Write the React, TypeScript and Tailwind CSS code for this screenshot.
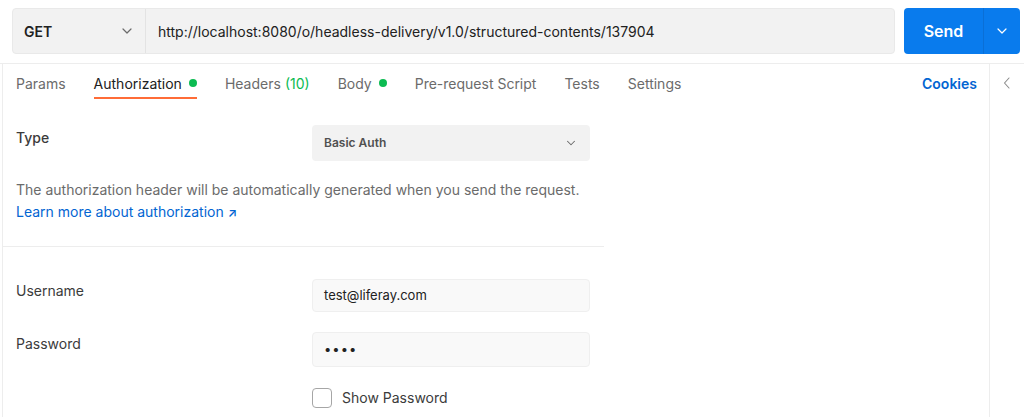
import React from "react";

const Chevron = ({ className = "" }: { className?: string }) => (
  <svg viewBox="0 0 16 16" className={className} fill="none" stroke="currentColor" strokeWidth="1.2" strokeLinecap="round" strokeLinejoin="round">
    <path d="M4 6l4 4 4-4" />
  </svg>
);

const Tab = ({ label, active, dot, count }: { label: string; active?: boolean; dot?: boolean; count?: string }) => (
  <div className="relative flex h-full items-center">
    <span className={active ? "text-[#212121]" : "text-[#6b6b6b]"}>{label}</span>
    {count && <span className="ml-[4px] text-[#0cbb52]">{count}</span>}
    {dot && <span className="ml-[7px] inline-block h-[8px] w-[8px] rounded-full bg-[#0cbb52]" />}
    {active && <span className="absolute bottom-[3px] left-0 right-0 h-[2px] bg-[#ff6c37]" />}
  </div>
);

export default function App() {
  return (
    <div className="h-[417px] w-[1024px] overflow-hidden bg-white text-[14px] text-[#212121]" style={{ fontFamily: "Inter, 'Noto Sans', sans-serif" }}>
      {/* request bar */}
      <div className="flex h-[64px] items-start gap-[9px] border-b border-[#ededed] pl-[12px] pt-[8px]">
        <div className="flex h-[46px] w-[883px] rounded-[4px] border border-[#e9e9e9] bg-[#f2f2f2]">
          <div className="flex w-[133px] items-center justify-between border-r border-[#e3e3e3] pl-[11px] pr-[10px]">
            <span className="font-semibold text-[#212121]">GET</span>
            <Chevron className="h-[16px] w-[16px] text-[#6b6b6b]" />
          </div>
          <div className="flex items-center pl-[12px] text-[#212121]">http://localhost:8080/o/headless-delivery/v1.0/structured-contents/137904</div>
        </div>
        <div className="flex h-[46px] w-[116px] overflow-hidden rounded-[4px] bg-[#097bed] text-white">
          <div className="flex w-[79px] items-center justify-center text-[16px] font-semibold">Send</div>
          <div className="flex flex-1 items-center justify-center border-l border-[#0a6fd6]">
            <Chevron className="h-[16px] w-[16px]" />
          </div>
        </div>
      </div>

      <div className="ml-[2px] flex h-[353px] border-l border-[#ededed]">
        <div className="w-[987px] border-r border-[#ededed]">
          {/* tabs */}
          <div className="flex h-[38px] items-center pl-[13px] pr-[12px] text-[14px]">
            <div className="flex h-full items-center gap-[28px]">
              <Tab label="Params" />
              <Tab label="Authorization" active dot />
              <Tab label="Headers" count="(10)" />
              <Tab label="Body" dot />
              <Tab label="Pre-request Script" />
              <Tab label="Tests" />
              <Tab label="Settings" />
            </div>
            <div className="ml-auto font-semibold text-[#0265d2]">Cookies</div>
          </div>

          {/* auth panel */}
          <div className="w-[601px]">
            <div className="pl-[13px] pt-[23px]">
              <div className="flex items-start">
                <div className="w-[296px] pt-[2px] text-[14px] font-medium text-[#3b3b3b]">Type</div>
                <div className="flex h-[36px] w-[278px] items-center justify-between rounded-[4px] bg-[#f2f2f2] pl-[12px] pr-[12px]">
                  <span className="text-[12px] font-semibold text-[#505050]">Basic Auth</span>
                  <Chevron className="h-[14px] w-[14px] text-[#6b6b6b]" />
                </div>
              </div>
              <div className="mt-[18px] text-[14px] leading-[22px] text-[#6b6b6b]">
                The authorization header will be automatically generated when you send the request.
              </div>
              <div className="text-[14px] leading-[22px] text-[#0265d2]">
                Learn more about authorization <span className="text-[12px] font-semibold">↗</span>
              </div>
            </div>
            <div className="mt-[22px] h-px bg-[#ededed]" />
            <div className="pl-[13px] pt-[32px]">
              <div className="flex items-start">
                <div className="w-[296px] pt-[1px] text-[14px] text-[#3b3b3b]">Username</div>
                <div className="flex h-[33px] w-[278px] items-center rounded-[4px] border border-[#efefef] bg-[#f9f9f9] pl-[11px] text-[13px] text-[#212121]">test@liferay.com</div>
              </div>
              <div className="mt-[20px] flex items-start">
                <div className="w-[296px] pt-[1px] text-[14px] text-[#3b3b3b]">Password</div>
                <div className="flex h-[35px] w-[278px] items-center rounded-[4px] border border-[#efefef] bg-[#f9f9f9] pl-[11px] text-[13px] tracking-[1px] text-[#212121]">••••</div>
              </div>
              <div className="mt-[20px] flex items-center pl-[296px]">
                <div className="h-[20px] w-[20px] rounded-[4px] border border-[#a6a6a6] bg-white" />
                <span className="ml-[10px] text-[14px] text-[#3b3b3b]">Show Password</span>
              </div>
            </div>
          </div>
        </div>
        <div className="flex flex-1 justify-center pt-[11px]">
          <svg viewBox="0 0 16 16" className="h-[16px] w-[16px] text-[#8a8a8a]" fill="none" stroke="currentColor" strokeWidth="1.1" strokeLinecap="round" strokeLinejoin="round">
            <path d="M10 3L5.5 8l4.5 5" />
          </svg>
        </div>
      </div>
    </div>
  );
}
